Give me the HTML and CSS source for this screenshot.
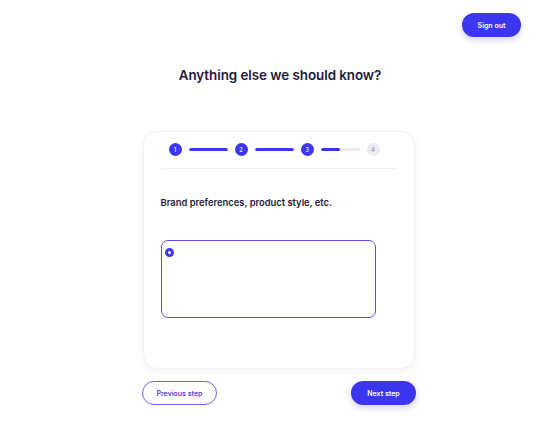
FILE: index.html
```html
<!DOCTYPE html>
<html>
<head>
<meta charset="utf-8">
<link rel="stylesheet" href="styles.css">
</head>
<body>
<div class="page">
  <header class="top">
    <button class="btn btn-primary signout">Sign out</button>
  </header>
  <h1 class="title">Anything else we should know?</h1>
  <main class="card">
    <div class="steps">
      <span class="dot done">1</span>
      <span class="bar"><span class="fill" style="width:100%"></span></span>
      <span class="dot done">2</span>
      <span class="bar"><span class="fill" style="width:100%"></span></span>
      <span class="dot done">3</span>
      <span class="bar"><span class="fill" style="width:50%"></span></span>
      <span class="dot todo">4</span>
    </div>
    <div class="divider"></div>
    <h2 class="question">Brand preferences, product style, etc.</h2>
    <div class="field">
      <span class="radio"></span>
    </div>
  </main>
  <div class="nav">
    <button class="btn btn-outline">Previous step</button>
    <button class="btn btn-primary next">Next step</button>
  </div>
</div>
</body>
</html>
```
FILE: styles.css
```css
* { box-sizing: border-box; }
html, body { margin: 0; padding: 0; background: #fff; }
body { font-family: "Inter", "DejaVu Sans", sans-serif; color: #1c1a3d; }
.page { width: 560px; height: 421px; display: flex; flex-direction: column; align-items: center; }
.top { width: 100%; display: flex; justify-content: flex-end; padding: 13px 39px 0 0; }
.btn { font-family: inherit; font-size: 7px; font-weight: 600; border-radius: 13px; height: 24px; cursor: pointer; padding: 0; }
.btn-primary { background: #3d36f1; color: #fff; border: none; box-shadow: 0 3px 6px rgba(61,54,241,0.22); }
.signout { width: 59px; }
.title { margin: 28px 0 0; font-size: 13.4px; font-weight: 600; line-height: 20px; letter-spacing: -0.05px; color: #1c1a3d; }
.card { margin-top: 46px; width: 272px; height: 238px; border-radius: 14px; background: #fff; border: 1px solid #f1f1f6; box-shadow: 0 2px 8px rgba(40,40,90,0.06); padding: 11px 19px 0 17px; display: flex; flex-direction: column; margin-left: -3px; }
.steps { display: flex; align-items: center; margin-left: 8px; }
.dot { width: 13px; height: 13px; border-radius: 50%; display: flex; align-items: center; justify-content: center; font-size: 6px; flex: none; }
.dot.done { background: #3d36f1; color: #fff; }
.dot.todo { background: #ecedf4; color: #8a8aa0; }
.bar { width: 39px; height: 2.5px; margin: 0 7px 0 7px; background: #ececf3; border-radius: 2px; position: relative; overflow: hidden; }
.fill { display: block; height: 100%; background: #3d36f1; border-radius: 2px; }
.divider { height: 1px; background: #efeff4; margin-top: 12px; }
.question { margin: 27px 0 0 0; font-size: 9.4px; font-weight: 600; line-height: 14px; color: #1c1a3d; }
.field { margin-top: 30px; width: 215px; height: 78px; border: 1px solid #5a4fe0; border-radius: 7px; padding: 7px 0 0 3px; }
.radio { display: block; width: 9px; height: 9px; border-radius: 50%; border: 3px solid #3d36f1; background: #fff; }
.nav { width: 274px; display: flex; justify-content: space-between; margin-top: 12px; margin-left: -2px; }
.btn-outline { width: 75px; background: #fff; color: #4a40e6; border: 1px solid #6c62ee; }
.next { width: 65px; }
```
